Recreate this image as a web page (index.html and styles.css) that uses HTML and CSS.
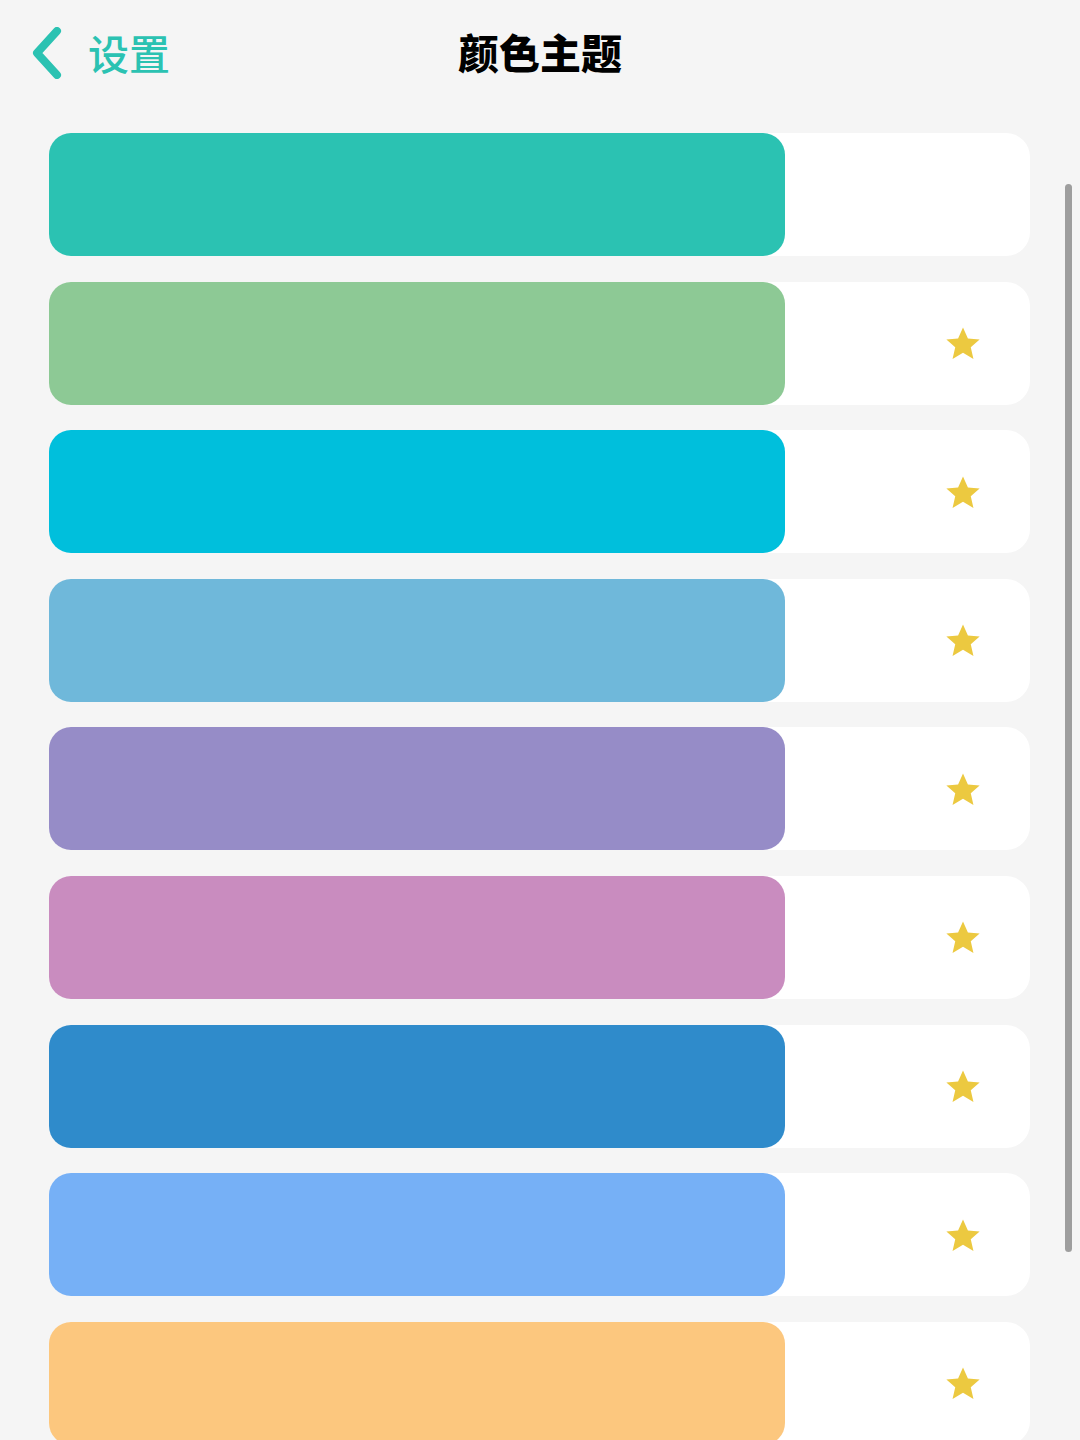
FILE: index.html
```html
<!DOCTYPE html>
<html lang="zh-CN">

<head>
  <meta charset="UTF-8">
  <meta name="viewport" content="width=device-width, initial-scale=1.0">
  <title>颜色主题</title>
  <link rel="stylesheet" href="styles.css">
</head>

<body>
  <div class="nav-bar">
    <a class="back-link" href="#">
      <svg class="back-icon" viewBox="0 0 32 52">
        <path d="M26 4 L6 26 L26 48" />
      </svg>
      <span>设置</span>
    </a>
    <h1 class="nav-title">颜色主题</h1>
  </div>

  <div class="theme-list">
    <div class="theme-item">
      <div class="swatch swatch-teal"></div>
      <div class="badge"></div>
    </div>
    <div class="theme-item">
      <div class="swatch swatch-green"></div>
      <div class="badge"><svg class="star" viewBox="0 0 24 24"><path d="M12 1.5l3.1 7.1 7.4.6-5.6 4.9 1.7 7.4L12 17.6l-6.6 3.9 1.7-7.4L1.5 9.2l7.4-.6z"/></svg></div>
    </div>
    <div class="theme-item">
      <div class="swatch swatch-cyan"></div>
      <div class="badge"><svg class="star" viewBox="0 0 24 24"><path d="M12 1.5l3.1 7.1 7.4.6-5.6 4.9 1.7 7.4L12 17.6l-6.6 3.9 1.7-7.4L1.5 9.2l7.4-.6z"/></svg></div>
    </div>
    <div class="theme-item">
      <div class="swatch swatch-sky"></div>
      <div class="badge"><svg class="star" viewBox="0 0 24 24"><path d="M12 1.5l3.1 7.1 7.4.6-5.6 4.9 1.7 7.4L12 17.6l-6.6 3.9 1.7-7.4L1.5 9.2l7.4-.6z"/></svg></div>
    </div>
    <div class="theme-item">
      <div class="swatch swatch-purple"></div>
      <div class="badge"><svg class="star" viewBox="0 0 24 24"><path d="M12 1.5l3.1 7.1 7.4.6-5.6 4.9 1.7 7.4L12 17.6l-6.6 3.9 1.7-7.4L1.5 9.2l7.4-.6z"/></svg></div>
    </div>
    <div class="theme-item">
      <div class="swatch swatch-pink"></div>
      <div class="badge"><svg class="star" viewBox="0 0 24 24"><path d="M12 1.5l3.1 7.1 7.4.6-5.6 4.9 1.7 7.4L12 17.6l-6.6 3.9 1.7-7.4L1.5 9.2l7.4-.6z"/></svg></div>
    </div>
    <div class="theme-item">
      <div class="swatch swatch-blue"></div>
      <div class="badge"><svg class="star" viewBox="0 0 24 24"><path d="M12 1.5l3.1 7.1 7.4.6-5.6 4.9 1.7 7.4L12 17.6l-6.6 3.9 1.7-7.4L1.5 9.2l7.4-.6z"/></svg></div>
    </div>
    <div class="theme-item">
      <div class="swatch swatch-azure"></div>
      <div class="badge"><svg class="star" viewBox="0 0 24 24"><path d="M12 1.5l3.1 7.1 7.4.6-5.6 4.9 1.7 7.4L12 17.6l-6.6 3.9 1.7-7.4L1.5 9.2l7.4-.6z"/></svg></div>
    </div>
    <div class="theme-item">
      <div class="swatch swatch-orange"></div>
      <div class="badge"><svg class="star" viewBox="0 0 24 24"><path d="M12 1.5l3.1 7.1 7.4.6-5.6 4.9 1.7 7.4L12 17.6l-6.6 3.9 1.7-7.4L1.5 9.2l7.4-.6z"/></svg></div>
    </div>
  </div>

  <div class="scroll-thumb"></div>
</body>

</html>
```

FILE: styles.css
```css
* {
  margin: 0;
  padding: 0;
  box-sizing: border-box;
}

body {
  height: 1440px;
  overflow: hidden;
  background: #f5f5f5;
  font-family: "Noto Sans CJK SC", "Noto Sans", sans-serif;
  position: relative;
}

.nav-bar {
  position: relative;
  height: 108px;
  display: flex;
  align-items: flex-start;
  justify-content: center;
  padding-top: 23px;
}

.back-link {
  position: absolute;
  left: 31px;
  top: 27px;
  display: flex;
  align-items: center;
  gap: 25px;
  color: #2bc2b2;
  text-decoration: none;
  font-size: 41px;
  font-weight: 500;
  line-height: 52px;
}

.back-link span {
  margin-top: -3px;
}

.back-icon {
  width: 32px;
  height: 52px;
  fill: none;
  stroke: #2bc2b2;
  stroke-width: 8;
  stroke-linecap: round;
  stroke-linejoin: round;
}

.nav-title {
  font-size: 41px;
  font-weight: 900;
  color: #000;
  line-height: 56px;
}

.theme-list {
  display: flex;
  flex-direction: column;
  gap: 25.6px;
  padding: 25px 50px 0 49px;
}

.theme-item {
  display: flex;
  height: 123px;
  background: #fff;
  border-radius: 24px;
  flex-shrink: 0;
}

.swatch {
  width: 736px;
  border-radius: 22px;
}

.badge {
  flex: 1;
  display: flex;
  align-items: center;
  justify-content: flex-end;
  padding-right: 48px;
  padding-top: 2px;
}

.star {
  width: 38px;
  height: 38px;
  fill: #ecc940;
}

.swatch-teal { background: #2bc2b2; }
.swatch-green { background: #8dc995; }
.swatch-cyan { background: #00bfdc; }
.swatch-sky { background: #6fb8da; }
.swatch-purple { background: #968cc7; }
.swatch-pink { background: #c98cbf; }
.swatch-blue { background: #2f8bcb; }
.swatch-azure { background: #76b0f6; }
.swatch-orange { background: #fcc77e; }

.scroll-thumb {
  position: absolute;
  left: 1065px;
  top: 184px;
  width: 7px;
  height: 1068px;
  border-radius: 4px;
  background: #9e9e9e;
}
```
